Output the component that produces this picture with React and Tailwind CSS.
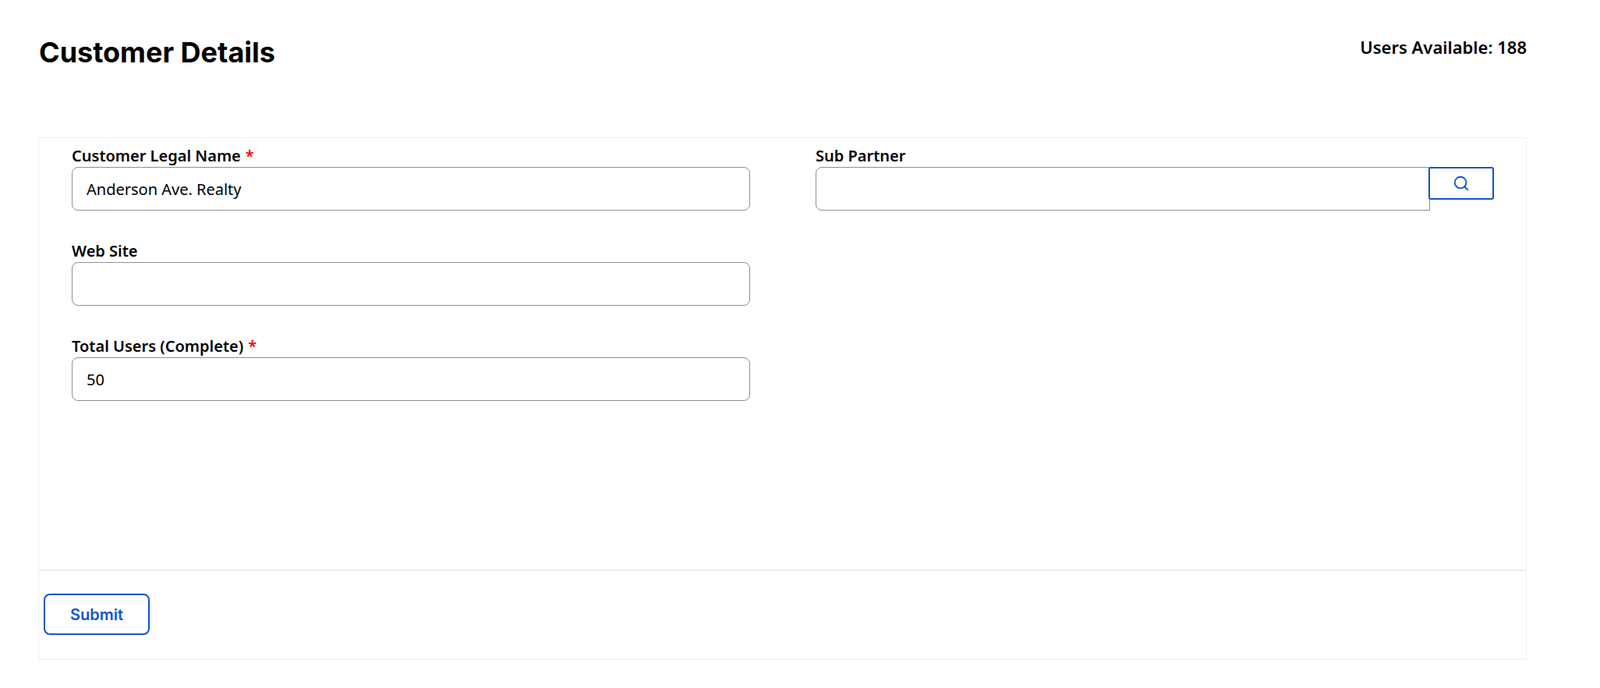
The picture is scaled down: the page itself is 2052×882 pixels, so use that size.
import React from "react";
import { Search } from "lucide-react";

const labelCls = "block h-[37px] pt-[9px] text-[20px] leading-[28px] font-semibold text-black font-['Noto_Sans',sans-serif]";
const inputCls = "block w-full h-[56px] px-[18px] border border-[#8f8f8f] rounded-[8px] bg-white text-[20px] text-black font-['Noto_Sans',sans-serif] outline-none";

function Field({ label, required, value, className }) {
  return (
    <div className={className}>
      <label className={labelCls}>
        {label}
        {required && <span className="text-[#ff0000] ml-[6px]">*</span>}
      </label>
      <input className={inputCls} defaultValue={value} />
    </div>
  );
}

export default function App() {
  return (
    <div className="w-[2052px] h-[882px] bg-white pl-[49px] pr-[94px] overflow-hidden">
      <div className="flex items-start justify-between h-[176px]">
        <h1 className="mt-[45px] ml-[1px] text-[36px] leading-[44px] font-bold text-black font-['Inter',sans-serif]">
          Customer Details
        </h1>
        <div className="mt-[44px] text-[22px] leading-[32px] font-semibold text-black font-['Noto_Sans',sans-serif]">
          Users Available: 188
        </div>
      </div>

      <div className="border border-[#f0f0f0] h-[670px] flex flex-col">
        <div className="h-[555px] border-b-2 border-[#ebebeb] pl-[42px] pr-[41px] flex gap-[84px]">
          <div className="w-[870px] flex flex-col gap-[29px]">
            <Field label="Customer Legal Name" required value="Anderson Ave. Realty" />
            <Field label="Web Site" value="" />
            <Field label="Total Users (Complete)" required value="50" />
          </div>
          <div className="flex-1">
            <label className={labelCls}>Sub Partner</label>
            <div className="flex items-start">
              <input className="block flex-1 h-[56px] px-[18px] border border-[#8f8f8f] rounded-l-[8px] bg-white outline-none" />
              <button className="w-[84px] h-[42px] -ml-[2px] relative flex items-center justify-center border-2 border-[#1155cc] rounded-[3px] bg-white text-[#1155cc]">
                <Search size={22} strokeWidth={2} />
              </button>
            </div>
          </div>
        </div>
        <div className="flex-1 pl-[6px] pt-[29px]">
          <button className="w-[136px] h-[53px] border-2 border-[#1155cc] rounded-[8px] bg-white text-[20px] font-semibold text-[#1155cc] font-['Inter',sans-serif]">
            Submit
          </button>
        </div>
      </div>
    </div>
  );
}
